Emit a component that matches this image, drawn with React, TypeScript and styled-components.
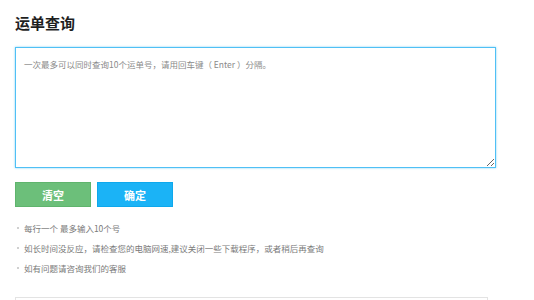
import styled, { createGlobalStyle } from "styled-components";

const GlobalStyle = createGlobalStyle`
  html, body {
    margin: 0;
    padding: 0;
    background: #fff;
    font-family: "Noto Sans CJK SC", "Liberation Sans", sans-serif;
  }
`;

const Page = styled.div`
  padding: 12px 15px 0 15px;
  width: 481px;
`;

const Title = styled.h2`
  margin: 0;
  font-size: 15px;
  line-height: 22px;
  font-weight: 700;
  color: #1f1f1f;
`;

const Field = styled.div`
  margin-top: 13px;
  width: 481px;
  height: 121px;
  box-sizing: border-box;
  border: 1px solid #4fc0f5;
  box-shadow: 0 0 2px rgba(79, 192, 245, 0.7);
  background: #fff;
`;

const QueryBox = styled.textarea`
  display: block;
  box-sizing: border-box;
  width: 100%;
  height: 100%;
  margin: 0;
  padding: 9px 8px;
  border: none;
  outline: none;
  background: transparent;
  resize: vertical;
  font-family: "Noto Sans CJK SC", "Liberation Sans", sans-serif;
  font-size: 8.5px;
  line-height: 14px;
  color: #333;

  &::placeholder {
    color: #8a8a8a;
  }
`;

const ButtonRow = styled.div`
  display: flex;
  gap: 6px;
  margin-top: 14px;
`;

const Button = styled.button<{ $tone: "green" | "blue" }>`
  box-sizing: border-box;
  width: 76px;
  height: 25px;
  padding: 0;
  border: 1px solid ${(p) => (p.$tone === "green" ? "#5fb46d" : "#0ea8ec")};
  background: ${(p) => (p.$tone === "green" ? "#6cbf7a" : "#1bb3f6")};
  color: #fff;
  font-family: "Noto Sans CJK SC", "Liberation Sans", sans-serif;
  font-size: 11px;
  font-weight: 700;
  cursor: pointer;
`;

const Tips = styled.ul`
  list-style: none;
  margin: 11px 0 0 0;
  padding: 0;
`;

const Tip = styled.li`
  position: relative;
  padding-left: 9px;
  font-size: 8.5px;
  line-height: 20px;
  color: #7a7a7a;

  &::before {
    content: "";
    position: absolute;
    left: 2px;
    top: 9px;
    width: 2px;
    height: 2px;
    background: #d0d0d0;
  }
`;

const Footer = styled.div`
  margin-top: 19px;
  width: 471px;
  height: 10px;
  border: 1px solid #e3e3e3;
  border-bottom: none;
`;

const tips = [
  "每行一个 最多输入10个号",
  "如长时间没反应，请检查您的电脑网速,建议关闭一些下载程序，或者稍后再查询",
  "如有问题请咨询我们的客服",
];

export default function App() {
  return (
    <>
      <GlobalStyle />
      <Page>
        <Title>运单查询</Title>
        <Field>
          <QueryBox placeholder="一次最多可以同时查询10个运单号，请用回车键（ Enter ）分隔。" />
        </Field>
        <ButtonRow>
          <Button $tone="green">清空</Button>
          <Button $tone="blue">确定</Button>
        </ButtonRow>
        <Tips>
          {tips.map((t) => (
            <Tip key={t}>{t}</Tip>
          ))}
        </Tips>
        <Footer />
      </Page>
    </>
  );
}
